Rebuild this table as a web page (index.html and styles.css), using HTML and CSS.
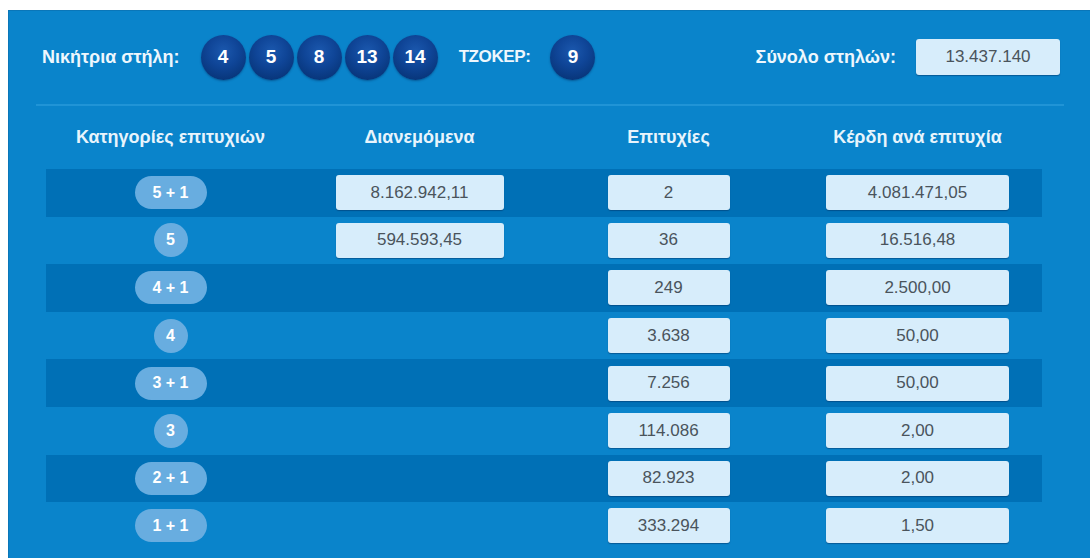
FILE: index.html
```html
<!DOCTYPE html>
<html lang="el">
<head>
<meta charset="utf-8">
<title>Αποτελέσματα κλήρωσης</title>
<link rel="stylesheet" href="styles.css">
</head>
<body>
<div class="panel">
  <div class="topbar">
    <div class="draw">
      <span class="label">Νικήτρια στήλη:</span>
      <div class="balls">
        <span class="ball">4</span>
        <span class="ball">5</span>
        <span class="ball">8</span>
        <span class="ball">13</span>
        <span class="ball">14</span>
      </div>
      <span class="label joker-label">TZOKEP:</span>
      <span class="ball">9</span>
    </div>
    <div class="total">
      <span class="label">Σύνολο στηλών:</span>
      <span class="field total-field">13.437.140</span>
    </div>
  </div>

  <div class="table">
    <div class="thead">
      <div class="th">Κατηγορίες επιτυχιών</div>
      <div class="th">Διανεμόμενα</div>
      <div class="th">Επιτυχίες</div>
      <div class="th">Κέρδη ανά επιτυχία</div>
    </div>

    <div class="row dark">
      <div class="cell"><span class="pill">5 + 1</span></div>
      <div class="cell"><span class="field f-dist">8.162.942,11</span></div>
      <div class="cell"><span class="field f-win">2</span></div>
      <div class="cell"><span class="field f-prize">4.081.471,05</span></div>
    </div>
    <div class="row">
      <div class="cell"><span class="pill round">5</span></div>
      <div class="cell"><span class="field f-dist">594.593,45</span></div>
      <div class="cell"><span class="field f-win">36</span></div>
      <div class="cell"><span class="field f-prize">16.516,48</span></div>
    </div>
    <div class="row dark">
      <div class="cell"><span class="pill">4 + 1</span></div>
      <div class="cell"></div>
      <div class="cell"><span class="field f-win">249</span></div>
      <div class="cell"><span class="field f-prize">2.500,00</span></div>
    </div>
    <div class="row">
      <div class="cell"><span class="pill round">4</span></div>
      <div class="cell"></div>
      <div class="cell"><span class="field f-win">3.638</span></div>
      <div class="cell"><span class="field f-prize">50,00</span></div>
    </div>
    <div class="row dark">
      <div class="cell"><span class="pill">3 + 1</span></div>
      <div class="cell"></div>
      <div class="cell"><span class="field f-win">7.256</span></div>
      <div class="cell"><span class="field f-prize">50,00</span></div>
    </div>
    <div class="row">
      <div class="cell"><span class="pill round">3</span></div>
      <div class="cell"></div>
      <div class="cell"><span class="field f-win">114.086</span></div>
      <div class="cell"><span class="field f-prize">2,00</span></div>
    </div>
    <div class="row dark">
      <div class="cell"><span class="pill">2 + 1</span></div>
      <div class="cell"></div>
      <div class="cell"><span class="field f-win">82.923</span></div>
      <div class="cell"><span class="field f-prize">2,00</span></div>
    </div>
    <div class="row">
      <div class="cell"><span class="pill">1 + 1</span></div>
      <div class="cell"></div>
      <div class="cell"><span class="field f-win">333.294</span></div>
      <div class="cell"><span class="field f-prize">1,50</span></div>
    </div>
  </div>
</div>
</body>
</html>
```

FILE: styles.css
```css
html, body {
  margin: 0;
  padding: 0;
  background: #ffffff;
  overflow: hidden;
}

body {
  width: 1090px;
  height: 558px;
  font-family: "Liberation Sans", Arial, sans-serif;
}

.panel {
  margin: 10px 0 0 8px;
  height: 548px;
  background: #0a84cb;
  padding: 0 26px 0 28px;
  box-shadow: inset 0 1px 0 #0a76b8, inset 1px 0 0 #0a76b8;
}

.topbar {
  display: flex;
  align-items: center;
  justify-content: space-between;
  height: 94px;
  padding: 0 4px 0 6px;
  border-bottom: 2px solid #2094d6;
  box-sizing: content-box;
}

.draw {
  display: flex;
  align-items: center;
}

.label {
  color: #eef7fd;
  font-weight: bold;
  font-size: 18px;
}

.draw > .label:first-child {
  margin-right: 21px;
}

.balls {
  display: flex;
  gap: 3px;
}

.ball {
  width: 45px;
  height: 45px;
  border-radius: 50%;
  display: flex;
  align-items: center;
  justify-content: center;
  color: #ffffff;
  font-weight: bold;
  font-size: 19px;
  background: radial-gradient(circle at 50% 36%, #1b58ae 0%, #0f4597 42%, #08367b 78%, #062c66 100%);
  box-shadow: 0 1px 2px rgba(0, 40, 90, 0.45);
}

.joker-label {
  margin: 0 20px 0 21px;
  font-size: 17px;
  letter-spacing: -0.4px;
}

.total {
  display: flex;
  align-items: center;
  gap: 20px;
}

.field {
  display: inline-flex;
  align-items: center;
  justify-content: center;
  height: 35px;
  background: #d7edfb;
  color: #4a545c;
  font-size: 17px;
  border-radius: 3px;
  box-shadow: 0 1px 1px rgba(0, 50, 100, 0.5);
}

.total-field {
  width: 144px;
  height: 36px;
}

.table {
  margin-left: 10px;
  width: 996px;
}

.thead {
  display: grid;
  grid-template-columns: repeat(4, 1fr);
  height: 63px;
  align-items: center;
}

.th {
  text-align: center;
  color: #e8f4fc;
  font-weight: bold;
  font-size: 18px;
}

.row {
  display: grid;
  grid-template-columns: repeat(4, 1fr);
  height: 47.6px;
  align-items: center;
}

.row.dark {
  background: #0070b6;
}

.cell {
  display: flex;
  justify-content: center;
  align-items: center;
}

.pill {
  display: inline-flex;
  align-items: center;
  justify-content: center;
  height: 33px;
  width: 72px;
  border-radius: 17px;
  background: #68ade0;
  color: #ffffff;
  font-weight: bold;
  font-size: 16px;
}

.pill.round {
  width: 34px;
  height: 34px;
}

.f-dist {
  width: 168px;
}

.f-win {
  width: 122px;
}

.f-prize {
  width: 183px;
}
```
